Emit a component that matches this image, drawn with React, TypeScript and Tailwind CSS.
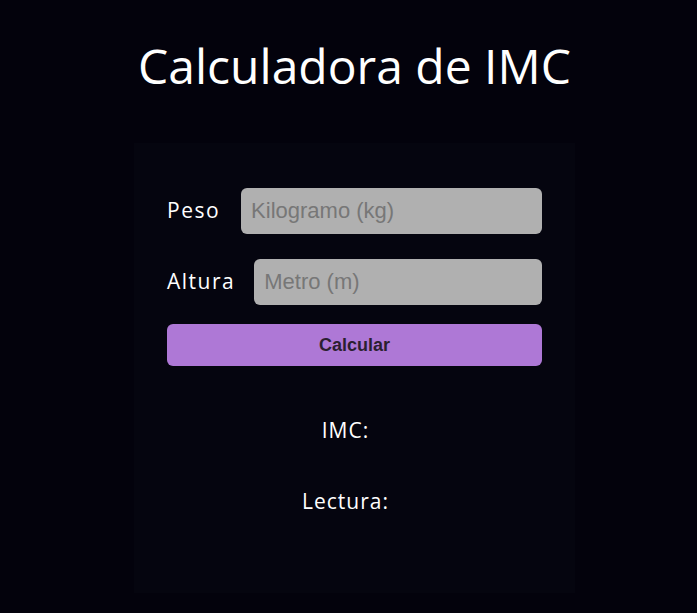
export default function App() {
  return (
    <div className="min-h-screen bg-[#03020c] flex flex-col items-center pl-3 pt-[37px] pb-[21px] font-['Open_Sans',sans-serif] text-white">
      <h1 className="text-[48px] leading-[58px] font-normal">Calculadora de IMC</h1>

      <div className="mt-[48px] w-[441px] bg-[#05050f] px-[33px] pt-[45px] pb-[78px]">
        <div className="flex items-center">
          <label className="text-[21px] tracking-[1.5px] mr-[21px]">Peso</label>
          <input
            placeholder="Kilogramo (kg)"
            className="flex-1 min-w-0 h-[46px] rounded-[6px] bg-[#b0b0b0] px-[10px] text-[22px] font-['Liberation_Sans',sans-serif] text-black placeholder:text-[#777777] outline-none"
          />
        </div>

        <div className="flex items-center mt-[25px]">
          <label className="text-[21px] tracking-[1.5px] mr-[19px]">Altura</label>
          <input
            placeholder="Metro (m)"
            className="flex-1 min-w-0 h-[46px] rounded-[6px] bg-[#b0b0b0] px-[10px] text-[22px] font-['Liberation_Sans',sans-serif] text-black placeholder:text-[#777777] outline-none"
          />
        </div>

        <button className="mt-[19px] w-full h-[42px] rounded-[6px] bg-[#ae78d6] text-[18px] font-bold text-[#2b1f30] font-['Liberation_Sans',sans-serif]">
          Calcular
        </button>

        <div className="mt-[50px] flex flex-col items-center pr-[18px] text-[21px] tracking-[1px] gap-[43px]">
          <p className="leading-[28px]">IMC: <span></span></p>
          <p className="leading-[28px]">Lectura: <span></span></p>
        </div>
      </div>
    </div>
  );
}
